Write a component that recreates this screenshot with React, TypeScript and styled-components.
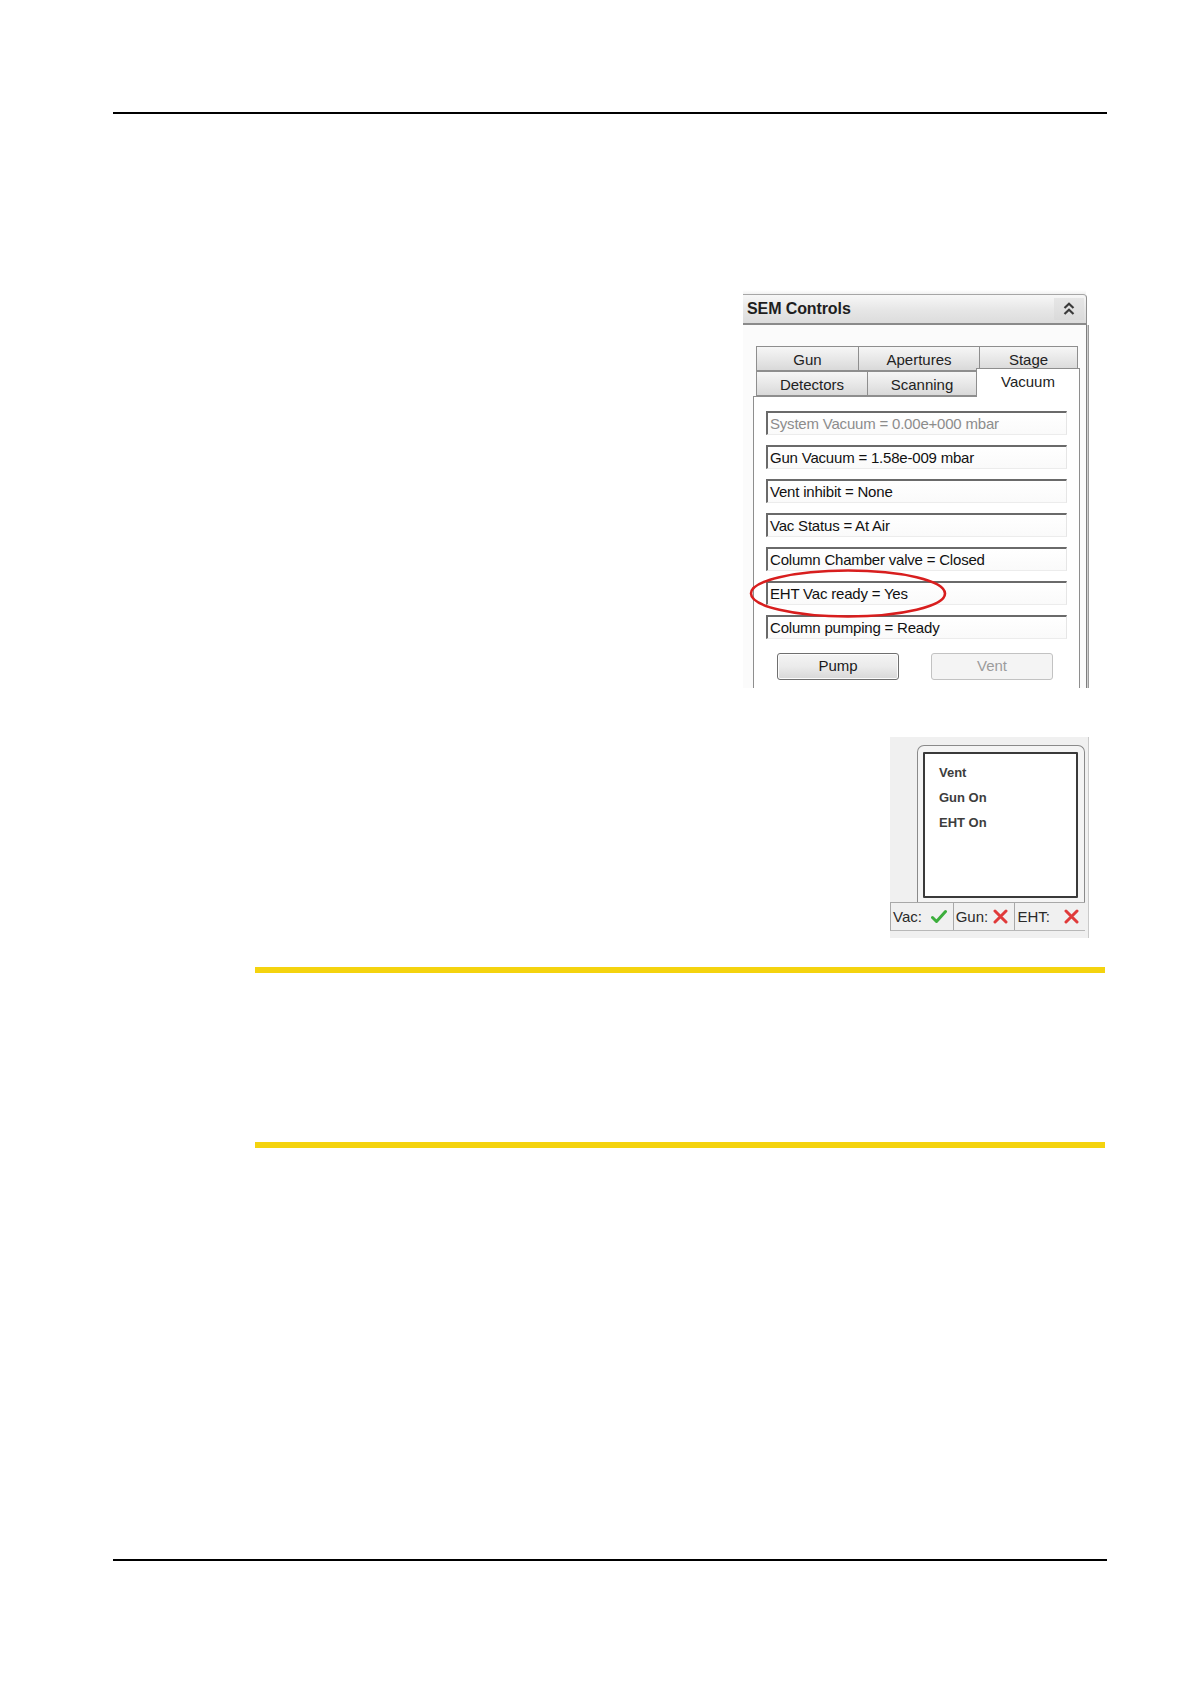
import React from "react";
import styled, { createGlobalStyle } from "styled-components";

const Global = createGlobalStyle`
  html, body { margin: 0; padding: 0; background: #fff; }
  body { font-family: "Liberation Sans", Arial, sans-serif; }
`;

const Page = styled.div`
  width: 1190px;
  height: 1684px;
  background: #fff;
  display: flex;
  flex-direction: column;
  overflow: hidden;
`;

const Rule = styled.div<{ $top: number }>`
  margin-top: ${(p) => p.$top}px;
  margin-left: 113px;
  width: 994px;
  height: 2px;
  background: #000;
  flex-shrink: 0;
`;

const YellowRule = styled.div<{ $top: number }>`
  margin-top: ${(p) => p.$top}px;
  margin-left: 255px;
  width: 850px;
  height: 6px;
  background: #f4d30e;
  flex-shrink: 0;
`;

/* ---------- SEM Controls panel ---------- */
const Panel = styled.div`
  position: relative;
  margin-top: 176px;
  margin-left: 743px;
  width: 347px;
  height: 398px;
  display: flex;
  flex-direction: column;
  background: #fff;
  flex-shrink: 0;
`;

const TopStrip = styled.div`
  height: 4px;
  background: linear-gradient(#ffffff, #f1f1f1);
  margin-right: 4px;
`;

const TitleBar = styled.div`
  height: 28px;
  margin-right: 3px;
  display: flex;
  align-items: center;
  justify-content: space-between;
  border-top: 1px solid #a6a6a6;
  border-right: 1px solid #8f8f8f;
  border-bottom: 2px solid #8a8a8a;
  border-top-right-radius: 4px;
  background: linear-gradient(#f7f7f7, #e6e6e6 55%, #dcdcdc);
  box-shadow: 0 1px 0 #cfcfcf;
`;

const Title = styled.span`
  font-family: "Liberation Sans", Arial, sans-serif;
  font-weight: bold;
  font-size: 16px;
  color: #1e1e1e;
  padding-left: 4px;
  letter-spacing: -0.1px;
`;

const ChevronButton = styled.div`
  width: 30px;
  height: 22px;
  display: flex;
  align-items: center;
  justify-content: center;
  background: linear-gradient(#e6e6e6, #dadada);
  margin-right: 2px;
`;

const Body = styled.div`
  flex: 1;
  display: flex;
  flex-direction: column;
  padding: 22px 0 0 10px;
  margin-right: 3px;
  border-right: 1px solid #7e7e7e;
  box-shadow: 1px 0 0 #d0d0d0, 2px 0 0 #9a9a9a;
  background: #fbfbfb;
`;

const TabRow = styled.div<{ $raised?: boolean }>`
  display: flex;
  padding-left: 3px;
  height: ${(p) => (p.$raised ? 25 : 24)}px;
  align-items: flex-end;
  position: relative;
`;

const Tab = styled.div<{ $w: number; $active?: boolean; $lh?: number }>`
  width: ${(p) => p.$w}px;
  box-sizing: border-box;
  height: ${(p) => (p.$active ? 29 : 25)}px;
  margin-bottom: ${(p) => (p.$active ? -1 : 0)}px;
  border: 1px solid #8e8e8e;
  border-bottom: ${(p) => (p.$active ? "none" : "1px solid #8e8e8e")};
  background: ${(p) =>
    p.$active ? "#ffffff" : "linear-gradient(#f6f6f6, #e8e8e8 50%, #d9d9d9)"};
  font-family: "Liberation Sans", Arial, sans-serif;
  font-size: 15px;
  color: #222;
  text-align: center;
  line-height: ${(p) => p.$lh ?? 24}px;
  z-index: ${(p) => (p.$active ? 2 : 1)};
  position: relative;
  & + & { margin-left: -1px; }
`;

const TabContent = styled.div`
  flex: 1;
  width: 327px;
  box-sizing: border-box;
  border: 1px solid #8e8e8e;
  border-bottom: none;
  background: #fff;
  padding: 14px 0 0 12px;
  display: flex;
  flex-direction: column;
  gap: 10px;
  position: relative;
  z-index: 1;
`;

const Field = styled.div<{ $disabled?: boolean }>`
  width: 301px;
  height: 24px;
  box-sizing: border-box;
  border-top: 2px solid #6a6a6a;
  border-left: 2px solid #6a6a6a;
  border-right: 1px solid #e6e6e6;
  border-bottom: 1px solid #ececec;
  background: linear-gradient(#ffffff, #fafafa);
  font-family: "Liberation Sans", Arial, sans-serif;
  font-size: 15px;
  line-height: 22px;
  padding-left: 2px;
  color: ${(p) => (p.$disabled ? "#8c8c8c" : "#111")};
  white-space: nowrap;
  letter-spacing: -0.2px;
`;

const ButtonRow = styled.div`
  display: flex;
  gap: 32px;
  padding-left: 11px;
  margin-top: 4px;
`;

const Btn = styled.div<{ $disabled?: boolean }>`
  width: 122px;
  height: 27px;
  box-sizing: border-box;
  border: 1px solid ${(p) => (p.$disabled ? "#c2c2c2" : "#6f6f6f")};
  border-radius: 3px;
  background: ${(p) =>
    p.$disabled ? "#f4f4f4" : "linear-gradient(#f4f4f4, #ebebeb 50%, #d8d8d8)"};
  box-shadow: ${(p) => (p.$disabled ? "none" : "inset 0 0 0 1px #fcfcfc")};
  font-family: "Liberation Sans", Arial, sans-serif;
  font-size: 15px;
  color: ${(p) => (p.$disabled ? "#9c9c9c" : "#1a1a1a")};
  text-align: center;
  line-height: 24px;
`;

const Highlight = styled.svg`
  position: absolute;
  left: 5px;
  top: 278px;
  width: 200px;
  height: 51px;
  z-index: 5;
  pointer-events: none;
`;

/* ---------- status window ---------- */
const StatusShot = styled.div`
  margin-top: 49px;
  margin-left: 890px;
  width: 199px;
  height: 201px;
  box-sizing: border-box;
  background: #f0f0f0;
  border-right: 1px solid #c9c9c9;
  box-shadow: 2px 0 0 #ffffff;
  padding: 8px 0 0 27px;
  display: flex;
  flex-direction: column;
  flex-shrink: 0;
`;

const Frame = styled.div`
  width: 168px;
  box-sizing: border-box;
  border: 1px solid #8a8a8a;
  border-bottom: none;
  border-radius: 7px 7px 0 0;
  padding: 6px 6px 4px 5px;
  background: #f4f4f4;
`;

const InnerBox = styled.div`
  height: 146px;
  box-sizing: border-box;
  border: 2px solid #3a3a3a;
  border-radius: 1px;
  background: #fff;
  padding: 6px 0 0 14px;
  display: flex;
  flex-direction: column;
`;

const StateLine = styled.div`
  font-family: "Liberation Sans", Arial, sans-serif;
  font-weight: bold;
  font-size: 13px;
  line-height: 25px;
  color: #3d3d3d;
`;

const StatusBar = styled.div`
  margin-left: -27px;
  width: 195px;
  height: 29px;
  box-sizing: border-box;
  border-top: 1px solid #a8a8a8;
  border-left: 1px solid #a8a8a8;
  border-bottom: 1px solid #b8b8b8;
  display: flex;
  background: #f0f0f0;
`;

const StatusCell = styled.div<{ $w: number }>`
  width: ${(p) => p.$w}px;
  box-sizing: border-box;
  display: flex;
  align-items: center;
  justify-content: space-between;
  padding: 0 6px 0 2px;
  border-right: 1px solid #a8a8a8;
  font-family: "Liberation Sans", Arial, sans-serif;
  font-size: 15px;
  color: #2a2a2a;
  &:last-child { border-right: none; }
`;

const Check = () => (
  <svg width="16" height="15" viewBox="0 0 16 15">
    <path d="M1.5 8.5 L5.5 12.5 L14.5 2.5" fill="none" stroke="#3cae3c" strokeWidth="3" strokeLinecap="round" strokeLinejoin="round" />
  </svg>
);

const Cross = () => (
  <svg width="15" height="15" viewBox="0 0 15 15">
    <path d="M2 2 L13 13 M13 2 L2 13" fill="none" stroke="#e03a3a" strokeWidth="3" strokeLinecap="round" />
  </svg>
);

const DoubleChevron = () => (
  <svg width="12" height="14" viewBox="0 0 12 14">
    <path d="M1.5 6 L6 1.8 L10.5 6 M1.5 12 L6 7.8 L10.5 12" fill="none" stroke="#3a3a3a" strokeWidth="2.2" />
  </svg>
);

const fields: { text: string; disabled?: boolean }[] = [
  { text: "System Vacuum = 0.00e+000 mbar", disabled: true },
  { text: "Gun Vacuum = 1.58e-009 mbar" },
  { text: "Vent inhibit = None" },
  { text: "Vac Status = At Air" },
  { text: "Column Chamber valve = Closed" },
  { text: "EHT Vac ready = Yes" },
  { text: "Column pumping = Ready" },
];

export default function App() {
  return (
    <>
      <Global />
      <Page>
        <Rule $top={112} />

        <Panel>
          <TopStrip />
          <TitleBar>
            <Title>SEM Controls</Title>
            <ChevronButton>
              <DoubleChevron />
            </ChevronButton>
          </TitleBar>
          <Body>
            <TabRow>
              <Tab $w={103} $lh={25}>Gun</Tab>
              <Tab $w={122} $lh={25}>Apertures</Tab>
              <Tab $w={99} $lh={25}>Stage</Tab>
            </TabRow>
            <TabRow $raised>
              <Tab $w={112} $lh={26}>Detectors</Tab>
              <Tab $w={110} $lh={26}>Scanning</Tab>
              <Tab $w={104} $active $lh={26}>
                Vacuum
              </Tab>
            </TabRow>
            <TabContent>
              {fields.map((f) => (
                <Field key={f.text} $disabled={f.disabled}>
                  {f.text}
                </Field>
              ))}
              <ButtonRow>
                <Btn>Pump</Btn>
                <Btn $disabled>Vent</Btn>
              </ButtonRow>
            </TabContent>
          </Body>
          <Highlight viewBox="0 0 200 51">
            <ellipse cx="100" cy="25.5" rx="97" ry="23" fill="none" stroke="#d81e1e" strokeWidth="2.6" />
          </Highlight>
        </Panel>

        <StatusShot>
          <Frame>
            <InnerBox>
              <StateLine>Vent</StateLine>
              <StateLine>Gun On</StateLine>
              <StateLine>EHT On</StateLine>
            </InnerBox>
          </Frame>
          <StatusBar>
            <StatusCell $w={63}>
              Vac: <Check />
            </StatusCell>
            <StatusCell $w={62}>
              Gun: <Cross />
            </StatusCell>
            <StatusCell $w={70}>
              EHT: <Cross />
            </StatusCell>
          </StatusBar>
        </StatusShot>

        <YellowRule $top={29} />
        <YellowRule $top={169} />

        <Rule $top={411} />
      </Page>
    </>
  );
}
